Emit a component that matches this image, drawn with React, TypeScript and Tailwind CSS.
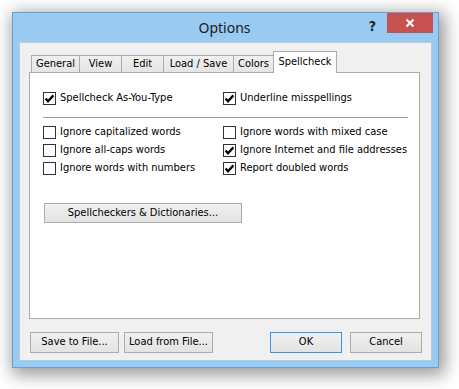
import React from 'react';

const ui = { fontFamily: '"DejaVu Sans Condensed", "DejaVu Sans", sans-serif' };

const Check: React.FC<{ checked?: boolean; label: string }> = ({ checked, label }) => (
  <label className="flex items-center h-[18px] gap-[4px] text-[11px] text-black">
    <span className="w-[13px] h-[13px] border border-[#333] bg-white flex items-center justify-center shrink-0">
      {checked && (
        <svg width="11" height="11" viewBox="0 0 11 11">
          <polyline points="1.6,5.4 4,8.2 9.4,2.4" fill="none" stroke="#000" strokeWidth="2.3" />
        </svg>
      )}
    </span>
    <span className="whitespace-nowrap">{label}</span>
  </label>
);

const Btn: React.FC<{ label: string; w: string; primary?: boolean }> = ({ label, w, primary }) => (
  <button
    className={`${w} h-[21px] text-[11px] text-black bg-gradient-to-b from-[#f0f0f0] to-[#e3e3e3] border ${primary ? 'border-[#3c93e8]' : 'border-[#acacac]'}`}
  >
    {label}
  </button>
);

const tabs = [
  { name: 'General', w: 'w-[48px]' },
  { name: 'View', w: 'w-[42px]' },
  { name: 'Edit', w: 'w-[42px]' },
  { name: 'Load / Save', w: 'w-[70px]' },
];

const App: React.FC = () => {
  return (
    <div className="w-[459px] h-[389px] bg-white pt-[12px] pl-[12px]" style={ui}>
      <div className="w-[427px] h-[356px] border border-[#6e9ecd] bg-[#99caf1] flex flex-col px-[6px] pb-[6px] shadow-[3px_4px_16px_3px_rgba(0,0,0,0.4)]">
        {/* title bar */}
        <div className="h-[29px] relative flex items-center justify-center shrink-0">
          <span className="text-[14px] text-[#1b1b1b] pr-[2px]" style={{ fontFamily: '"Noto Sans", sans-serif' }}>
            Options
          </span>
          <span className="absolute right-[56px] top-[3px] text-[14px] font-bold text-[#222]">?</span>
          <div className="absolute right-[-1px] top-0 w-[46px] h-[20px] bg-[#c75050] flex items-center justify-center">
            <svg width="10" height="10" viewBox="0 0 10 10">
              <path d="M1.5 1.5 L8.5 8.5 M8.5 1.5 L1.5 8.5" stroke="#fff" strokeWidth="2" />
            </svg>
          </div>
        </div>

        {/* client */}
        <div className="flex-1 border border-[#b6cde0] bg-[#f0f0f0] flex flex-col">
          <div className="flex items-end ml-[11px] mt-[8px] h-[21px] relative z-10">
            {tabs.map((t) => (
              <div
                key={t.name}
                className={`${t.w} h-[17px] border-l border-t border-[#acacac] bg-gradient-to-b from-[#f0f0f0] to-[#e5e5e5] text-[11px] text-black flex items-center justify-center`}
              >
                {t.name}
              </div>
            ))}
            <div className="w-[41px] h-[17px] border-l border-t border-r border-[#acacac] bg-gradient-to-b from-[#f0f0f0] to-[#e5e5e5] text-[11px] text-black flex items-center justify-center">
              Colors
            </div>
            <div className="w-[64px] h-[22px] -ml-[1px] -mb-[1px] border-l border-t border-r border-[#acacac] bg-white text-[11px] text-black flex items-start justify-center pt-[2px]">
              Spellcheck
            </div>
          </div>

          <div className="ml-[9px] w-[391px] h-[247px] border border-[#acacac] bg-white flex flex-col pt-[16px]">
            <div className="grid grid-cols-[180px_1fr] pl-[13px]">
              <Check checked label="Spellcheck As-You-Type" />
              <Check checked label="Underline misspellings" />
            </div>
            <div className="ml-[13px] mt-[10px] w-[365px] h-px bg-[#a0a0a0]" />
            <div className="grid grid-cols-[180px_1fr] pl-[13px] mt-[5px]">
              <Check label="Ignore capitalized words" />
              <Check label="Ignore words with mixed case" />
              <Check label="Ignore all-caps words" />
              <Check checked label="Ignore Internet and file addresses" />
              <Check label="Ignore words with numbers" />
              <Check checked label="Report doubled words" />
            </div>
            <div className="ml-[14px] mt-[22px]">
              <button className="w-[198px] h-[20px] text-[11px] text-black bg-gradient-to-b from-[#f0f0f0] to-[#e3e3e3] border border-[#acacac]">
                Spellcheckers &amp; Dictionaries...
              </button>
            </div>
          </div>

          <div className="flex justify-between mt-[13px] pl-[10px] pr-[9px]">
            <div className="flex gap-[5px]">
              <Btn label="Save to File..." w="w-[89px]" />
              <Btn label="Load from File..." w="w-[89px]" />
            </div>
            <div className="flex gap-[8px]">
              <Btn label="OK" w="w-[72px]" primary />
              <Btn label="Cancel" w="w-[72px]" />
            </div>
          </div>
        </div>
      </div>
    </div>
  );
};

export default App;
